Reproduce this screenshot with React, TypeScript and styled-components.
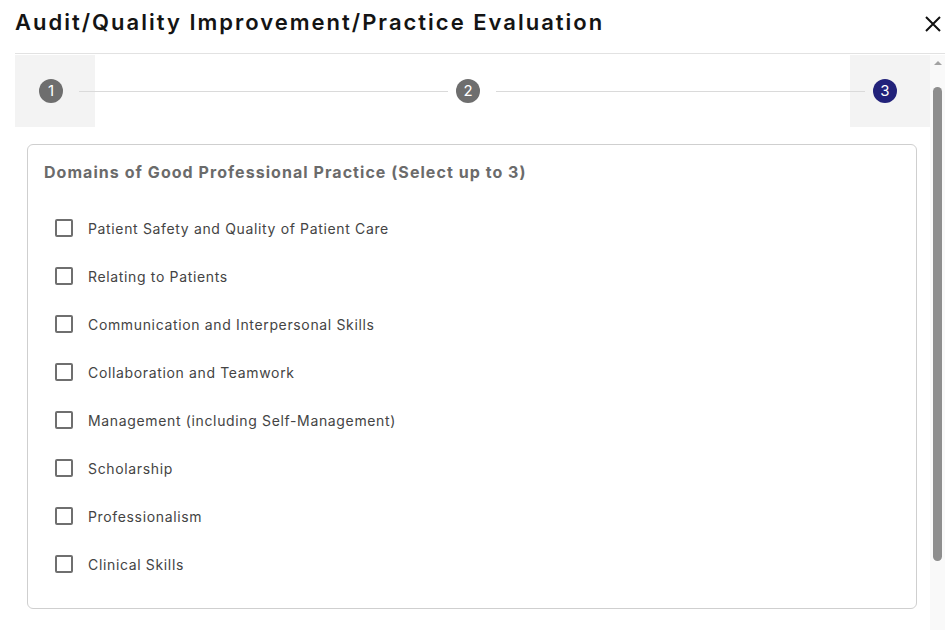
import React from "react";
import styled, { createGlobalStyle } from "styled-components";

const GlobalStyle = createGlobalStyle`
  html, body {
    margin: 0;
    padding: 0;
    background: #ffffff;
    overflow: hidden;
  }
  body {
    font-family: Inter, "Open Sans", "Liberation Sans", sans-serif;
    color: #333;
  }
`;

const Dialog = styled.div`
  width: 930px;
  padding-left: 15px;
  height: 630px;
  display: flex;
  flex-direction: column;
`;

const Header = styled.div`
  height: 54px;
  flex: none;
  display: flex;
  align-items: center;
  justify-content: space-between;
  border-bottom: 1px solid #e2e2e2;
  box-sizing: border-box;
  padding-bottom: 9px;
`;

const Title = styled.h2`
  margin: 0;
  font-size: 22px;
  font-weight: 600;
  letter-spacing: 2px;
  color: #141414;
`;

const CloseButton = styled.button`
  border: none;
  background: none;
  padding: 0;
  margin: 3px 4px 0 0;
  width: 16px;
  height: 16px;
  display: flex;
  cursor: pointer;
`;

const Body = styled.div`
  flex: 1;
  display: flex;
  overflow: hidden;
  margin-top: 1px;
`;

const Content = styled.div`
  flex: 1;
  overflow: hidden;
`;

const Rail = styled.div`
  width: 15px;
  flex: none;
  background: #f9f9f9;
  display: flex;
  flex-direction: column;
  align-items: center;
  padding-top: 6px;
`;

const RailArrow = styled.div`
  width: 0;
  height: 0;
  border-left: 4.5px solid transparent;
  border-right: 4.5px solid transparent;
  border-bottom: 4px solid #a3a3a3;
`;

const RailThumb = styled.div`
  width: 9px;
  height: 474px;
  margin-top: 22px;
  border-radius: 5px;
  background: #8e8e8e;
`;

const Stepper = styled.div`
  height: 72px;
  display: flex;
  align-items: center;
  padding: 0 17px 0 16px;
  background:
    linear-gradient(#f3f3f3, #f3f3f3) left top / 80px 100% no-repeat,
    linear-gradient(#f3f3f3, #f3f3f3) right top / 80px 100% no-repeat;
`;

const Step = styled.div`
  padding: 0 8px;
  display: flex;
`;

const StepIcon = styled.div<{ $active?: boolean }>`
  width: 24px;
  height: 24px;
  margin-right: 8px;
  border-radius: 50%;
  background: ${(p) => (p.$active ? "#22227a" : "#6e6e6e")};
  color: #fff;
  font-size: 15px;
  line-height: 24px;
  text-align: center;
`;

const Connector = styled.div`
  flex: 1;
  border-top: 1px solid #dadada;
`;

const Card = styled.div`
  margin: 17px 13px 110px 12px;
  border: 1px solid #cfcfcf;
  border-radius: 6px;
  padding: 17px 16px 20px;
  height: 465px;
  box-sizing: border-box;
`;

const Heading = styled.div`
  font-size: 16px;
  font-weight: 700;
  color: #6b6b6b;
  letter-spacing: 1.05px;
  margin-bottom: 22px;
`;

const Option = styled.label`
  display: flex;
  align-items: center;
  height: 48px;
  padding-left: 11px;
  font-size: 14px;
  color: #444;
  letter-spacing: 0.65px;
  cursor: pointer;
`;

const Box = styled.span`
  width: 18px;
  height: 18px;
  box-sizing: border-box;
  border: 2px solid #6f6f6f;
  border-radius: 2px;
  margin-right: 15px;
  flex: none;
`;

const domains = [
  "Patient Safety and Quality of Patient Care",
  "Relating to Patients",
  "Communication and Interpersonal Skills",
  "Collaboration and Teamwork",
  "Management (including Self-Management)",
  "Scholarship",
  "Professionalism",
  "Clinical Skills",
];

export default function App() {
  return (
    <>
      <GlobalStyle />
      <Dialog>
        <Header>
          <Title>Audit/Quality Improvement/Practice Evaluation</Title>
          <CloseButton aria-label="close">
            <svg width="16" height="16" viewBox="0 0 16 16">
              <path d="M1 1L15 15M15 1L1 15" stroke="#111" strokeWidth="2" />
            </svg>
          </CloseButton>
        </Header>
        <Body>
          <Content>
            <Stepper>
              <Step>
                <StepIcon>1</StepIcon>
              </Step>
              <Connector />
              <Step>
                <StepIcon>2</StepIcon>
              </Step>
              <Connector />
              <Step>
                <StepIcon $active>3</StepIcon>
              </Step>
            </Stepper>
            <Card>
              <Heading>Domains of Good Professional Practice (Select up to 3)</Heading>
              {domains.map((d) => (
                <Option key={d}>
                  <Box />
                  {d}
                </Option>
              ))}
            </Card>
          </Content>
          <Rail>
            <RailArrow />
            <RailThumb />
          </Rail>
        </Body>
      </Dialog>
    </>
  );
}
